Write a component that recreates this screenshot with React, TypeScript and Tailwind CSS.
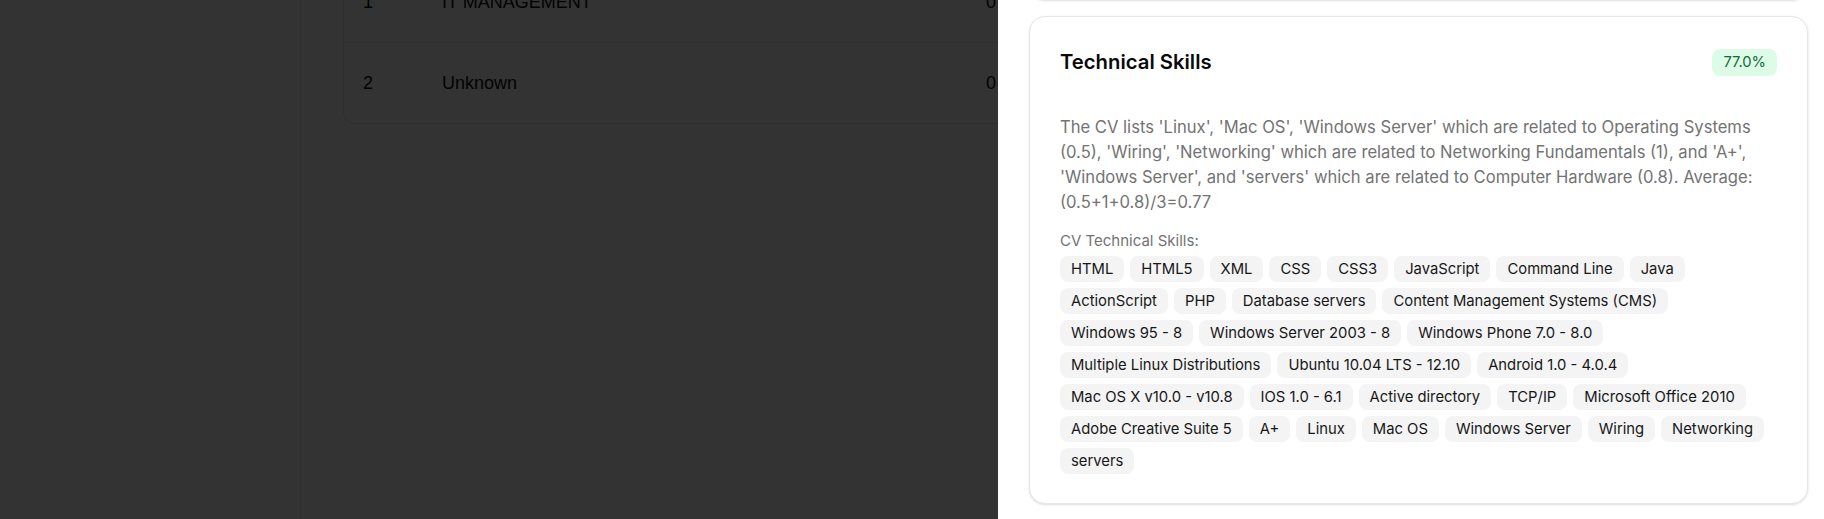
import React from "react";

const skills = [
  "HTML",
  "HTML5",
  "XML",
  "CSS",
  "CSS3",
  "JavaScript",
  "Command Line",
  "Java",
  "ActionScript",
  "PHP",
  "Database servers",
  "Content Management Systems (CMS)",
  "Windows 95 - 8",
  "Windows Server 2003 - 8",
  "Windows Phone 7.0 - 8.0",
  "Multiple Linux Distributions",
  "Ubuntu 10.04 LTS - 12.10",
  "Android 1.0 - 4.0.4",
  "Mac OS X v10.0 - v10.8",
  "IOS 1.0 - 6.1",
  "Active directory",
  "TCP/IP",
  "Microsoft Office 2010",
  "Adobe Creative Suite 5",
  "A+",
  "Linux",
  "Mac OS",
  "Windows Server",
  "Wiring",
  "Networking",
  "servers",
];

export default function App() {
  return (
    <div className="relative h-[519px] w-full overflow-hidden bg-white">
      {/* Underlying page */}
      <div className="flex h-full font-['Liberation_Sans',Arial,sans-serif] text-[18px] text-[#0a0a0a]">
        <aside className="h-full w-[301px] shrink-0 border-r border-gray-200" />
        <main className="flex-1 pl-[42px]">
          <div className="-mt-[38px] w-[900px] rounded-b-xl border border-t-0 border-gray-200">
            <div className="flex h-[81px] items-center border-b border-gray-200 pl-[19px]">
              <div className="w-[79px]">1</div>
              <div className="w-[544px]">IT MANAGEMENT</div>
              <div>0</div>
            </div>
            <div className="flex h-[80px] items-center pl-[19px]">
              <div className="w-[79px]">2</div>
              <div className="w-[544px]">Unknown</div>
              <div>0</div>
            </div>
          </div>
        </main>
      </div>

      {/* Overlay */}
      <div className="absolute inset-0 bg-black/80" />

      {/* Sheet */}
      <div className="absolute inset-y-0 right-0 w-[826px] overflow-hidden bg-white font-['Inter',sans-serif]">
        <div className="flex flex-col gap-4 pl-[31px] pr-[16px]">
          <div className="-mt-[120px] h-[120px] rounded-2xl border border-gray-200 bg-white shadow-sm" />
          <div className="rounded-2xl border border-gray-200 bg-white px-[30px] pt-[31px] pb-[29px] shadow-sm">
            <div className="flex h-[28px] items-center justify-between">
              <h3 className="text-[20.3px] leading-7 font-semibold text-[#0a0a0a]">Technical Skills</h3>
              <span className="flex h-[27px] items-center rounded-lg bg-[#dcfce7] px-[11px] text-[14.7px] text-[#15693a]">
                77.0%
              </span>
            </div>
            <p className="mt-[39px] text-[16.6px] leading-[25px] text-[#737373]">
              The CV lists 'Linux', 'Mac OS', 'Windows Server' which are related to Operating Systems (0.5),
              'Wiring', 'Networking' which are related to Networking Fundamentals (1), and 'A+', 'Windows
              Server', and 'servers' which are related to Computer Hardware (0.8). Average: (0.5+1+0.8)/3=0.77
            </p>
            <div className="mt-4 text-[15px] leading-5 text-[#737373]">CV Technical Skills:</div>
            <div className="mt-[5px] flex flex-wrap gap-[6px]">
              {skills.map((s) => (
                <span
                  key={s}
                  className="flex h-[26px] items-center rounded-lg bg-[#f4f4f5] px-[11px] text-[14.8px] leading-none text-[#171717]"
                >
                  {s}
                </span>
              ))}
            </div>
          </div>
        </div>
      </div>
    </div>
  );
}
